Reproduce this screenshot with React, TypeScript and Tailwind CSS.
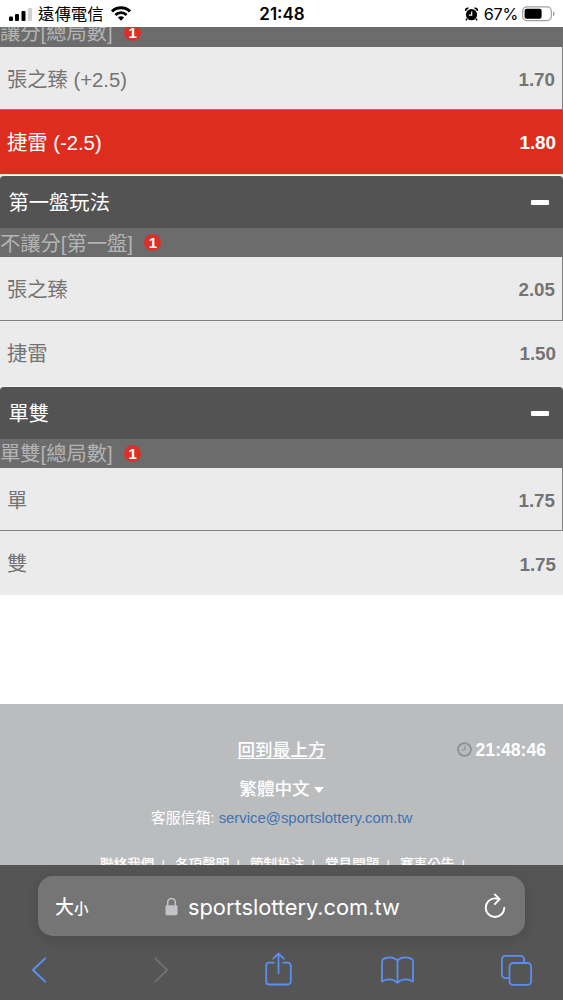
import { twMerge } from "tailwind-merge";

type Option = {
  name: string;
  odds: string;
  selected?: boolean;
};

const footerLinks = ["聯絡我們", "各項聲明", "節制投注", "常見問題", "賽事公告"];

function StatusBar() {
  return (
    <header className="flex h-[27px] shrink-0 items-center bg-white font-['Inter','Noto_Sans_CJK_TC',sans-serif] text-black">
      <div className="flex flex-1 items-center pl-[9px]">
        <svg className="mt-0.5" width="23" height="15" viewBox="0 0 23 15">
          <rect x="0" y="9.5" width="4" height="4.5" rx="1" />
          <rect x="6" y="7" width="4" height="7" rx="1" />
          <rect x="12.5" y="4" width="4" height="10" rx="1" />
          <rect x="19" y="1" width="4" height="13" rx="1" fill="#d0d0d0" />
        </svg>
        <span className="ml-1.5 mt-0.5 text-[16.4px] leading-none">遠傳電信</span>
        <svg
          className="ml-[7px]"
          width="20"
          height="15"
          viewBox="0 0 20 15"
          fill="none"
          stroke="#000"
          strokeWidth="3"
        >
          <path d="M1 5.4a12.8 12.8 0 0 1 18 0" />
          <path d="M4.4 9a8 8 0 0 1 11.2 0" strokeWidth="2.7" />
          <path d="M10 14.7 6.9 11.5a4.4 4.4 0 0 1 6.2 0Z" fill="#000" stroke="none" />
        </svg>
      </div>
      <span className="mt-0.5 text-[17px] font-semibold leading-none">21:48</span>
      <div className="flex flex-1 items-center justify-end pr-2">
        <svg className="mt-0.5" width="13" height="15" viewBox="0 0 14 15">
          <circle cx="7" cy="7.7" r="6" />
          <path d="M2.2 12 1 13.8M11.8 12l1.2 1.8" stroke="#000" strokeWidth="1.6" />
          <path d="M.8 3.6A2.2 2.2 0 0 1 3.7 1M13.2 3.6A2.2 2.2 0 0 0 10.3 1" stroke="#000" strokeWidth="2" fill="none" />
          <path d="M7.2 4.4v3.8H4.2" stroke="#fff" strokeWidth="1.3" fill="none" />
        </svg>
        <span className="ml-1.5 mt-0.5 text-[16.2px] leading-none tracking-[-0.3px]">67%</span>
        <svg className="ml-1 mt-px" width="33" height="16" viewBox="0 0 33 16">
          <rect x="0.7" y="0.9" width="28.6" height="13.7" rx="4" fill="none" stroke="#a0a0a0" strokeWidth="1.2" />
          <rect x="2.6" y="2.8" width="17" height="10" rx="2" />
          <path d="M31 5.3v5q1.5-.8 1.5-2.5T31 5.3Z" fill="#999" />
        </svg>
      </div>
    </header>
  );
}

function SectionHeader({ title }: { title: string }) {
  return (
    <div className="bg-[#ececec]">
      <div className="flex h-[53px] items-center justify-between rounded-t-[4px] border-t border-[#f4f4f4] bg-[#535353] pl-[8.5px] pr-3.5 text-[20.3px] text-white">
        <span className="pt-[3px]">{title}</span>
        <span className="mt-px h-[5px] w-[18px] rounded-[1px] bg-white" />
      </div>
    </div>
  );
}

function MarketTitle({ title, className }: { title: string; className?: string }) {
  return (
    <div
      className={twMerge(
        "flex h-[29px] items-center bg-[#6c6c6c] text-[20.3px] text-[#b4b4b4]",
        className,
      )}
    >
      <span className="pt-[3px]">{title}</span>
      <span className="ml-[11.5px] mt-px flex size-[17px] items-center justify-center rounded-full bg-[#d9302b] text-[15px] font-bold leading-none text-white">
        1
      </span>
    </div>
  );
}

function OptionRow({ option, first }: { option: Option; first?: boolean }) {
  return (
    <div
      className={twMerge(
        "flex h-16 shrink-0 items-center justify-between bg-[#ebebeb] px-[7px] pt-[3px] text-[20.3px] text-[#747474]",
        first && "h-[63.6px] border-b border-r border-[#808080] pt-1",
        option.selected && "h-[63.8px] bg-[#dc2d1e] text-white",
      )}
    >
      <span>{option.name}</span>
      <span className="text-[18.8px] font-bold">{option.odds}</span>
    </div>
  );
}

function Footer() {
  return (
    <footer className="flex h-[161px] shrink-0 flex-col overflow-hidden bg-[#bbbcbe] text-white">
      <div className="mt-[33px] grid h-7 grid-cols-[1fr_auto_1fr] items-center pr-[17px]">
        <a className="col-start-2 ml-[17px] text-[17.6px] font-medium underline underline-offset-2">
          回到最上方
        </a>
        <div className="flex items-center justify-end gap-1">
          <svg className="mb-px" width="15" height="15" viewBox="0 0 15 15" fill="none" stroke="#909193">
            <circle cx="7.5" cy="7.5" r="6.4" strokeWidth="1.9" />
            <path d="M7.9 3.7v4.2H4.8" strokeWidth="1.3" />
          </svg>
          <span className="pt-px text-[17.6px] font-bold leading-none">21:48:46</span>
        </div>
      </div>
      <div className="mt-[13px] flex h-7 items-center justify-center gap-1 text-[17.6px] font-medium">
        繁體中文
        <span className="border-x-[5.5px] border-t-[6px] border-x-transparent border-t-white" />
      </div>
      <p className="mt-[3px] text-center text-[14.9px] leading-6">
        客服信箱: <a className="text-[#3f73b3]">service@sportslottery.com.tw</a>
      </p>
      <div className="mt-[23px] flex shrink-0 pl-[100px] text-[13.6px] font-medium leading-6">
        {footerLinks.map((link) => (
          <span key={link} className="flex w-[75px] shrink-0 gap-[7px]">
            {link}
            <span>|</span>
          </span>
        ))}
      </div>
    </footer>
  );
}

function BrowserBar() {
  return (
    <div className="flex h-[135px] shrink-0 flex-col bg-[#555] font-['Inter','Noto_Sans_CJK_TC',sans-serif] text-white">
      <div className="mx-[38px] mt-[11px] flex h-[60px] items-center rounded-[15px] bg-[#757575] px-[17px] shadow-[0_3px_14px_rgba(0,0,0,0.14)]">
        <div className="flex w-[110px] items-baseline pt-[3px] font-medium leading-none">
          <span className="text-[19px]">大</span>
          <span className="text-[14.5px]">小</span>
        </div>
        <svg width="13" height="19" viewBox="0 0 13 19">
          <rect x="0.5" y="8.2" width="12" height="10" rx="1.4" fill="#c3c2c8" />
          <path d="M2.7 9V5.3a3.8 3.8 0 0 1 7.6 0V9" fill="none" stroke="#c3c2c8" strokeWidth="1.5" />
        </svg>
        <span className="ml-[10px] pt-[3px] text-[21.8px] leading-none">sportslottery.com.tw</span>
        <svg
          className="ml-auto mr-0.5"
          width="22"
          height="26"
          viewBox="0 0 22 26"
          fill="none"
          stroke="#fff"
          strokeWidth="1.9"
          strokeLinecap="round"
          strokeLinejoin="round"
        >
          <path d="M20.3 14.7A9.3 9.3 0 1 1 11 5.4c1.7 0 3 .4 4.3.7" />
          <path d="M10.8 1.4 15.6 6.2 10.8 11.1" />
        </svg>
      </div>

      <nav className="mt-4 flex h-9 items-center pl-8 text-[#5a8ff0]">
        <svg width="15" height="26" viewBox="0 0 15 26" fill="none" stroke="currentColor" strokeWidth="2" strokeLinecap="round" strokeLinejoin="round">
          <path d="M13.2 1.4 1 13l12.2 11.6" />
        </svg>
        <svg className="ml-[107px] text-[#707070]" width="15" height="26" viewBox="0 0 15 26" fill="none" stroke="currentColor" strokeWidth="2" strokeLinecap="round" strokeLinejoin="round">
          <path d="M1.3 1.4 13.2 13 1.3 24.6" />
        </svg>
        <svg className="mb-0.5 ml-[96px]" width="27" height="34" viewBox="0 0 27 34" fill="none" stroke="currentColor" strokeWidth="1.8" strokeLinecap="round" strokeLinejoin="round">
          <path d="M8.7 10.7H4.2a3 3 0 0 0-3 3v15.8a3 3 0 0 0 3 3h18.6a3 3 0 0 0 3-3V13.7a3 3 0 0 0-3-3h-4.5" />
          <path d="M13.5 21.4V1.6M8.2 6.7l5.3-5.2 5.3 5.2" />
        </svg>
        <svg className="ml-[89px]" width="33" height="28" viewBox="0 0 33 28" fill="none" stroke="currentColor" strokeWidth="1.8" strokeLinecap="round" strokeLinejoin="round">
          <path d="M16.5 4.4C14.4 2.3 11.9 1.3 9 1.3 5.4 1.3 1 3 1 5.2v20.4c2.2-1.5 4.6-2.2 7.5-2.2s5.5 1 8 3.4c2.5-2.4 5.1-3.4 8-3.4s5.3.7 7.5 2.2V5.2c0-2.2-4.4-3.9-8-3.9-2.9 0-5.4 1-7.5 3.1Zm0 0v22" />
        </svg>
        <svg className="ml-[87px]" width="31" height="31" viewBox="0 0 31 31" fill="none" stroke="currentColor" strokeWidth="1.8" strokeLinejoin="round">
          <rect x="8.5" y="8" width="21.6" height="21.8" rx="3.5" />
          <path d="M8.2 23.2H4.4A3.5 3.5 0 0 1 .9 19.7V4.4A3.5 3.5 0 0 1 4.4.9h15.2a3.5 3.5 0 0 1 3.5 3.5v3.4" />
        </svg>
      </nav>
    </div>
  );
}

function App() {
  return (
    <div className="flex h-[1000px] w-[563px] flex-col overflow-hidden bg-white font-['Liberation_Sans','Noto_Sans_CJK_TC',sans-serif]">
      <StatusBar />
      <main className="flex h-[677px] shrink-0 flex-col">
        {/* The first market is scrolled under the status bar */}
        <div className="flex h-[19.6px] shrink-0 flex-col justify-end overflow-hidden">
          <MarketTitle title="讓分[總局數]" className="shrink-0" />
        </div>
        <OptionRow option={{ name: "張之臻 (+2.5)", odds: "1.70" }} first />
        <OptionRow option={{ name: "捷雷 (-2.5)", odds: "1.80", selected: true }} />

        <div className="h-px shrink-0 bg-[#dcdcdc]" />
        <SectionHeader title="第一盤玩法" />
        <MarketTitle title="不讓分[第一盤]" />
        <OptionRow option={{ name: "張之臻", odds: "2.05" }} first />
        <OptionRow option={{ name: "捷雷", odds: "1.50" }} />

        <div className="h-px shrink-0 bg-[#ececec]" />
        <SectionHeader title="單雙" />
        <MarketTitle title="單雙[總局數]" />
        <OptionRow option={{ name: "單", odds: "1.75" }} first />
        <OptionRow option={{ name: "雙", odds: "1.75" }} />
      </main>
      <Footer />
      <BrowserBar />
    </div>
  );
}

export default App;
